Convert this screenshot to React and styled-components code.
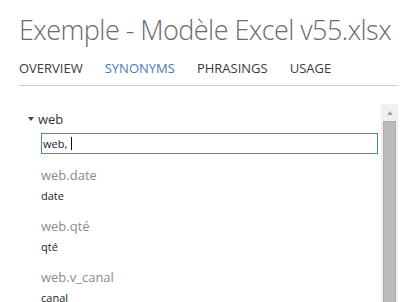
import React from 'react';
import styled, { createGlobalStyle } from 'styled-components';

const GlobalStyle = createGlobalStyle`
  html, body {
    margin: 0;
    padding: 0;
    background: #ffffff;
    overflow: hidden;
  }
  body {
    font-family: "Open Sans", "Noto Sans", sans-serif;
  }
`;

const Page = styled.div`
  width: 412px;
  height: 302px;
  padding: 0 14px 0 19px;
  box-sizing: border-box;
  display: flex;
  flex-direction: column;
  overflow: hidden;
`;

// file name heading
const Title = styled.h1`
  margin: 13px 0 0;
  font-size: 27px;
  font-weight: 300;
  letter-spacing: -0.55px;
  line-height: 34px;
  color: #6b6b6b;
  white-space: nowrap;
`;

const Tabs = styled.nav`
  display: flex;
  gap: 22px;
  margin-top: 12px;
  padding-bottom: 8px;
  border-bottom: 1px solid #cfcfcf;
`;

const Tab = styled.span`
  font-size: 13px;
  line-height: 18px;
  color: ${(props) => (props.active ? '#4b79b5' : '#3a3a3a')};
`;

const Panel = styled.div`
  flex: 1;
  display: flex;
  margin-top: 18px;
  min-height: 0;
`;

const Content = styled.div`
  flex: 1;
  overflow: hidden;
  padding-top: 6px;
`;

// tree node header (triangle + table name)
const NodeHeader = styled.div`
  display: flex;
  align-items: center;
  gap: 4px;
  padding-left: 9px;
  font-size: 13px;
  line-height: 18px;
  color: #333;
`;

const Caret = styled.span`
  width: 0;
  height: 0;
  border-left: 3.5px solid transparent;
  border-right: 3.5px solid transparent;
  border-top: 4px solid #444;
`;

const Children = styled.div`
  padding-left: 22px;
  padding-right: 3px;
`;

const SynonymInput = styled.div`
  margin-top: 5px;
  height: 21px;
  box-sizing: border-box;
  border: 1px solid #3c8dbf;
  display: flex;
  align-items: center;
  padding-left: 1px;
  font-size: 11px;
  color: #222;
`;

const Cursor = styled.span`
  display: inline-block;
  width: 1px;
  height: 13px;
  background: #111;
  margin-left: 4px;
`;

const Field = styled.div`
  margin-top: ${(props) => (props.first ? '12px' : '14px')};
`;

const FieldName = styled.div`
  font-size: 13px;
  line-height: 18px;
  color: #8c8c8c;
`;

const FieldValue = styled.div`
  font-size: 11px;
  line-height: 15px;
  margin-top: 4px;
  color: #1c1c1c;
`;

// fake scrollbar
const Scrollbar = styled.div`
  width: 17px;
  background: #f0f0f0;
  display: flex;
  flex-direction: column;
`;

const ArrowButton = styled.div`
  height: 17px;
  display: flex;
  align-items: center;
  justify-content: center;
`;

const ArrowUp = styled.span`
  width: 0;
  height: 0;
  border-left: 3.5px solid transparent;
  border-right: 3.5px solid transparent;
  border-bottom: 4px solid #a3a3a3;
`;

const Thumb = styled.div`
  flex: 1;
  margin: 0 2px;
  background: #bcbcbc;
  border: 1px solid #b0b0b0;
  border-bottom: none;
`;

const fields = [
  { name: 'web.date', value: 'date' },
  { name: 'web.qté', value: 'qté' },
  { name: 'web.v_canal', value: 'canal' },
];

export default function App() {
  return (
    <>
      <GlobalStyle />
      <Page>
        <Title>Exemple - Modèle Excel v55.xlsx</Title>
        <Tabs>
          <Tab>OVERVIEW</Tab>
          <Tab active>SYNONYMS</Tab>
          <Tab>PHRASINGS</Tab>
          <Tab>USAGE</Tab>
        </Tabs>
        <Panel>
          <Content>
            <NodeHeader>
              <Caret />
              web
            </NodeHeader>
            <Children>
              <SynonymInput>
                web,
                <Cursor />
              </SynonymInput>
              {fields.map((f, i) => (
                <Field key={f.name} first={i === 0}>
                  <FieldName>{f.name}</FieldName>
                  <FieldValue>{f.value}</FieldValue>
                </Field>
              ))}
            </Children>
          </Content>
          <Scrollbar>
            <ArrowButton>
              <ArrowUp />
            </ArrowButton>
            <Thumb />
          </Scrollbar>
        </Panel>
      </Page>
    </>
  );
}
